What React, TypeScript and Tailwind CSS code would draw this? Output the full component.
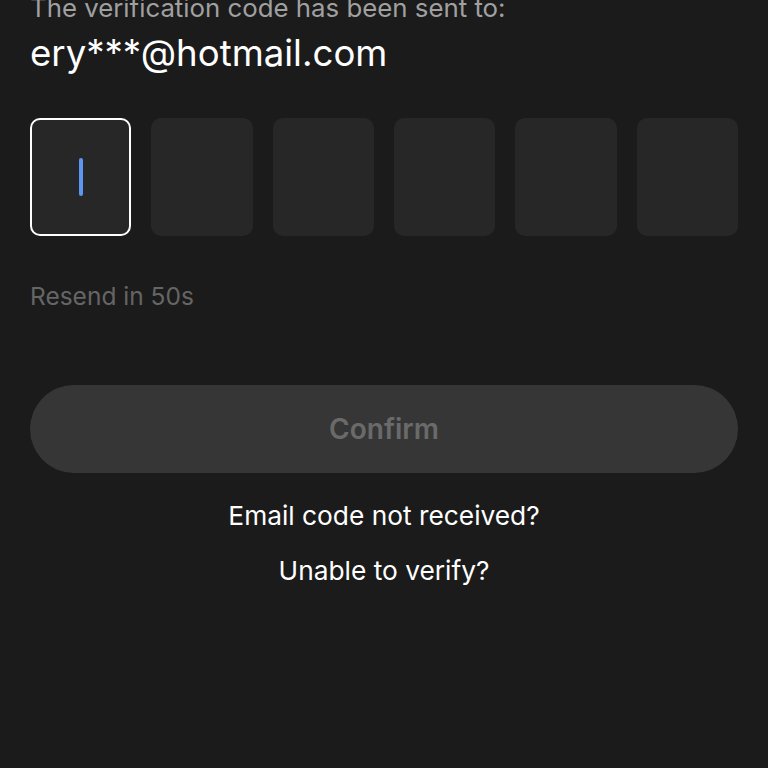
import React from 'react';

export default function App() {
  const boxes = [0, 1, 2, 3, 4, 5];

  return (
    <div
      className="w-full h-[768px] bg-[#1b1b1b] overflow-hidden px-[30px]"
      style={{ fontFamily: 'Inter, "Noto Sans", sans-serif' }}
    >
      <p className="text-[25.8px] leading-[30px] text-[#a0a0a0] -mt-[7px]">The verification code has been sent to:</p>
      <p className="text-[36.6px] leading-[44px] text-white mt-[8px]">ery***@hotmail.com</p>

      {/* Code inputs */}
      <div className="grid grid-cols-6 gap-[20px] mt-[43px]">
        {boxes.map((i) => (
          <div
            key={i}
            className={`h-[118px] rounded-[10px] bg-[#272727] flex items-center justify-center ${
              i === 0 ? 'border-2 border-white' : ''
            }`}
          >
            {i === 0 && <div className="w-[4px] h-[38px] rounded-full bg-[#5c95f2]" />}
          </div>
        ))}
      </div>

      <p className="text-[24.5px] leading-[30px] text-[#656565] mt-[45px]">Resend in 50s</p>

      <button className="w-full h-[88px] rounded-full bg-[#363636] mt-[74px] text-[28px] font-semibold text-[#6a6a6a]">
        Confirm
      </button>

      <div className="flex flex-col items-center mt-[27px] gap-[23px] text-white text-[26.3px] leading-[32px]">
        <p>Email code not received?</p>
        <p>Unable to verify?</p>
      </div>
    </div>
  );
}
